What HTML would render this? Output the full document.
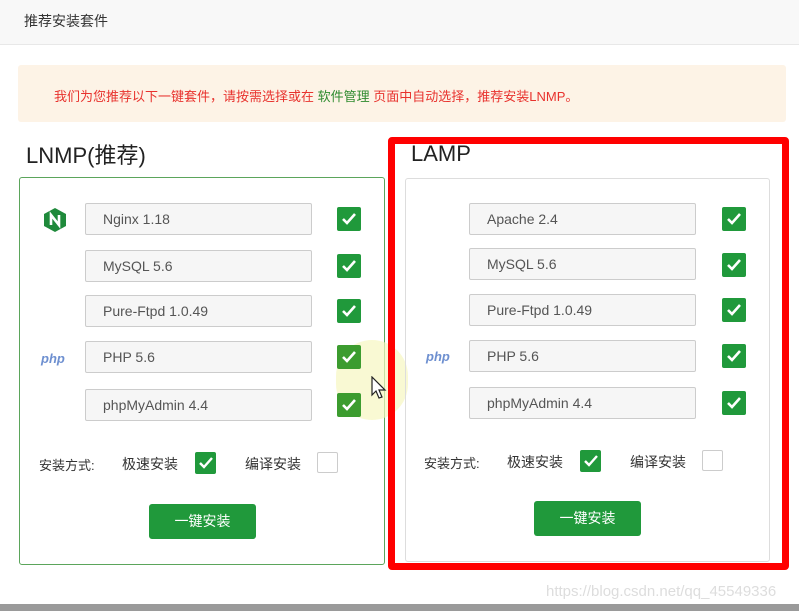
<!DOCTYPE html>
<html><head><meta charset="utf-8"><style>
*{margin:0;padding:0;box-sizing:border-box}
body{width:799px;height:611px;background:#fff;position:relative;overflow:hidden;font-family:"Liberation Sans","Noto Sans CJK SC",sans-serif;color:#333}
.a{position:absolute}
.inp{position:absolute;width:227px;height:32px;border:1px solid #ccc;border-radius:2px;background:#f6f6f6;font-size:14px;color:#555;padding-left:17px;line-height:30px}
.cb{position:absolute;width:24px;height:24px;background:#20993b;border-radius:2px}
.cb svg{position:absolute;left:4px;top:5px}
.sm{width:21px;height:22px}
.sm svg{left:3px;top:4px}
.ecb{position:absolute;width:21px;height:21px;border:1px solid #ccc;border-radius:2px;background:#fff}
.btn{position:absolute;width:107px;height:35px;background:#20993b;border-radius:3px;color:#fff;font-size:14px;text-align:center;line-height:35px}
.t{position:absolute;font-size:14px;color:#333;white-space:nowrap}
.php{position:absolute;font-size:13px;font-weight:bold;font-style:italic;color:#6d8fd0}
</style></head><body>
<div class="a" style="left:0;top:0;width:799px;height:45px;background:#f8f8f8;border-bottom:1px solid #e8e8e8"></div>
<div class="t" style="left:24px;top:11px;font-size:14px;color:#333">推荐安装套件</div>
<div class="a" style="left:18px;top:65px;width:768px;height:57px;background:#fdf3e6;border-radius:3px"></div>
<div class="t" style="left:54px;top:86px;font-size:13px;color:#e8322d">我们为您推荐以下一键套件，请按需选择或在 <span style="color:#2e8b2e">软件管理</span> 页面中自动选择，推荐安装LNMP。</div>
<div class="t" style="left:26px;top:138px;font-size:22px;color:#222">LNMP(推荐)</div>
<div class="a" style="left:19px;top:177px;width:366px;height:388px;border:1px solid #5ba55b;border-radius:3px"></div>
<svg class="a" style="left:43px;top:207px" width="24" height="26" viewBox="0 0 24 26"><polygon points="12,1 23,7 23,19 12,25 1,19 1,7" fill="#1f8a3b"/><path d="M8 18V8l8 10V8" stroke="#fff" stroke-width="2.6" fill="none"/></svg>
<div class="inp" style="left:85px;top:203px">Nginx 1.18</div>
<div class="inp" style="left:85px;top:250px">MySQL 5.6</div>
<div class="inp" style="left:85px;top:295px">Pure-Ftpd 1.0.49</div>
<div class="inp" style="left:85px;top:341px">PHP 5.6</div>
<div class="inp" style="left:85px;top:389px">phpMyAdmin 4.4</div>
<div class="php" style="left:41px;top:351px">php</div>
<div class="a" style="left:336px;top:340px;width:72px;height:80px;background:#f7f6c0;border-radius:40px;opacity:.7"></div>
<div class="cb" style="left:337px;top:207px"><svg width="16" height="14"><path d="M2 7l4 4 8-9" stroke="#fff" stroke-width="2.6" fill="none"/></svg></div>
<div class="cb" style="left:337px;top:254px"><svg width="16" height="14"><path d="M2 7l4 4 8-9" stroke="#fff" stroke-width="2.6" fill="none"/></svg></div>
<div class="cb" style="left:337px;top:299px"><svg width="16" height="14"><path d="M2 7l4 4 8-9" stroke="#fff" stroke-width="2.6" fill="none"/></svg></div>
<div class="cb" style="left:337px;top:345px;background:#3c9c2f"><svg width="16" height="14"><path d="M2 7l4 4 8-9" stroke="#fff" stroke-width="2.6" fill="none"/></svg></div>
<div class="cb" style="left:337px;top:393px;background:#3c9c2f"><svg width="16" height="14"><path d="M2 7l4 4 8-9" stroke="#fff" stroke-width="2.6" fill="none"/></svg></div>
<svg class="a" style="left:371px;top:376px" width="16" height="24"><path d="M1 1v18l4-4 3 7 3-1-3-7h6z" fill="#fff" stroke="#222" stroke-width="1.2"/></svg>
<div class="t" style="left:39px;top:455px;font-size:13px">安装方式:</div>
<div class="t" style="left:122px;top:454px">极速安装</div>
<div class="cb sm" style="left:195px;top:452px"><svg width="16" height="14"><path d="M2 7l4 4 8-9" stroke="#fff" stroke-width="2.4" fill="none"/></svg></div>
<div class="t" style="left:245px;top:454px">编译安装</div>
<div class="ecb" style="left:317px;top:452px"></div>
<div class="btn" style="left:149px;top:504px">一键安装</div>

<div class="a" style="left:388px;top:137px;width:401px;height:433px;border:7px solid #ff0000;border-radius:4px"></div>
<div class="t" style="left:411px;top:141px;font-size:22px;color:#222">LAMP</div>
<div class="a" style="left:405px;top:178px;width:365px;height:384px;border:1px solid #ddd;border-radius:3px"></div>
<div class="inp" style="left:469px;top:203px">Apache 2.4</div>
<div class="inp" style="left:469px;top:248px">MySQL 5.6</div>
<div class="inp" style="left:469px;top:294px">Pure-Ftpd 1.0.49</div>
<div class="inp" style="left:469px;top:340px">PHP 5.6</div>
<div class="inp" style="left:469px;top:387px">phpMyAdmin 4.4</div>
<div class="php" style="left:426px;top:349px">php</div>
<div class="cb" style="left:722px;top:207px"><svg width="16" height="14"><path d="M2 7l4 4 8-9" stroke="#fff" stroke-width="2.6" fill="none"/></svg></div>
<div class="cb" style="left:722px;top:253px"><svg width="16" height="14"><path d="M2 7l4 4 8-9" stroke="#fff" stroke-width="2.6" fill="none"/></svg></div>
<div class="cb" style="left:722px;top:298px"><svg width="16" height="14"><path d="M2 7l4 4 8-9" stroke="#fff" stroke-width="2.6" fill="none"/></svg></div>
<div class="cb" style="left:722px;top:344px"><svg width="16" height="14"><path d="M2 7l4 4 8-9" stroke="#fff" stroke-width="2.6" fill="none"/></svg></div>
<div class="cb" style="left:722px;top:391px"><svg width="16" height="14"><path d="M2 7l4 4 8-9" stroke="#fff" stroke-width="2.6" fill="none"/></svg></div>
<div class="t" style="left:424px;top:453px;font-size:13px">安装方式:</div>
<div class="t" style="left:507px;top:452px">极速安装</div>
<div class="cb sm" style="left:580px;top:450px"><svg width="16" height="14"><path d="M2 7l4 4 8-9" stroke="#fff" stroke-width="2.4" fill="none"/></svg></div>
<div class="t" style="left:630px;top:452px">编译安装</div>
<div class="ecb" style="left:702px;top:450px"></div>
<div class="btn" style="left:534px;top:501px">一键安装</div>

<div class="t" style="left:546px;top:583px;font-size:15px;color:#ddd">https://blog.csdn.net/qq_45549336</div>
<div class="a" style="left:0;top:604px;width:799px;height:7px;background:#9a9a9a"></div>
</body></html>
